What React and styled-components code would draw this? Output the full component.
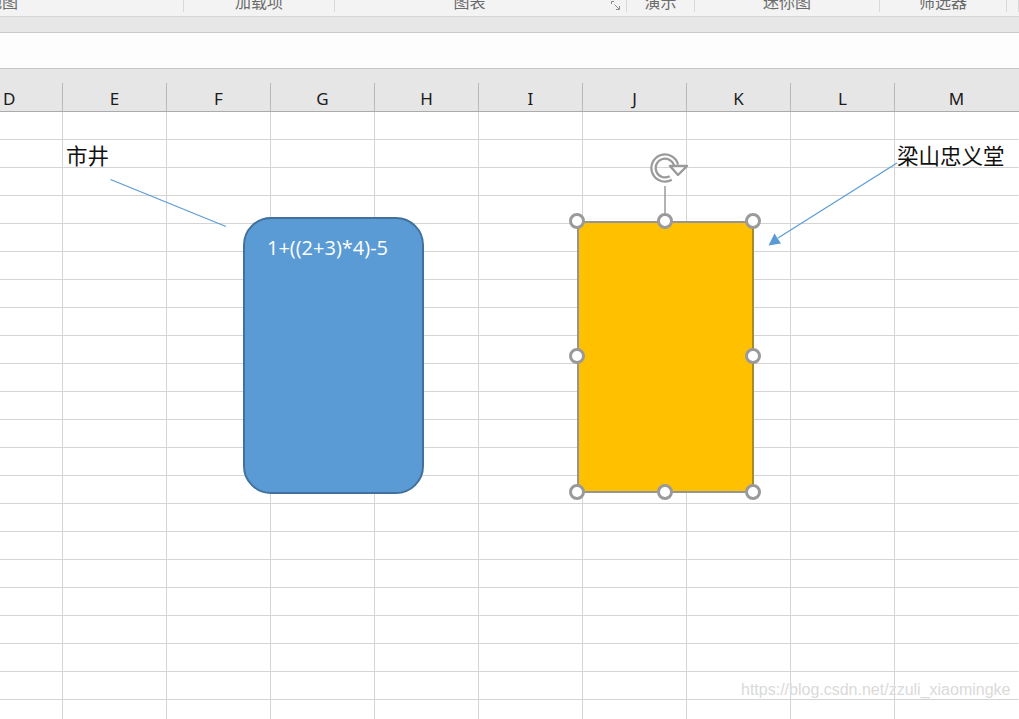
import React from "react";
import styled, { createGlobalStyle } from "styled-components";

const GlobalStyle = createGlobalStyle`
  html, body {
    margin: 0;
    padding: 0;
    background: #fff;
    overflow: hidden;
  }
  body {
    font-family: "Noto Sans", "Noto Sans CJK SC", sans-serif;
  }
`;

const Window = styled.div`
  position: relative;
  width: 1019px;
  height: 719px;
  overflow: hidden;
  background: #fff;
  display: flex;
  flex-direction: column;
`;

// ribbon group captions, cut off at the top of the screenshot
const RibbonCaptions = styled.div`
  display: flex;
  height: 16px;
  flex-shrink: 0;
  background: #f3f3f3;
  border-bottom: 1px solid #d6d6d6;
  overflow: hidden;
`;

const Group = styled.div`
  flex: 0 0 ${(p) => p.$w}px;
  height: 12px;
  display: flex;
  align-items: flex-start;
  justify-content: ${(p) => (p.$start ? "flex-start" : "center")};
  border-right: 1px solid #d9d9d9;
  box-sizing: border-box;
  padding-right: ${(p) => p.$padRight || 0}px;
`;

const Caption = styled.span`
  font-family: "Noto Sans CJK SC", sans-serif;
  font-size: 16px;
  line-height: 16px;
  color: #6b6b6b;
  margin-top: -7px;
  margin-left: ${(p) => p.$shift || 0}px;
  white-space: nowrap;
`;

const Launcher = styled.svg`
  position: absolute;
  left: 611px;
  top: 1px;
`;

const Band = styled.div`
  height: 15px;
  flex-shrink: 0;
  background: #e7e7e7;
  border-bottom: 1px solid #c9c9c9;
`;

const FormulaBar = styled.div`
  height: 35px;
  flex-shrink: 0;
  background: #fdfdfd;
  border-bottom: 1px solid #c6c6c6;
`;

const ColumnHeader = styled.div`
  height: 42px;
  flex-shrink: 0;
  background: #e6e6e6;
  border-bottom: 1px solid #ababab;
  display: grid;
  grid-template-columns: 63px repeat(8, 104px) 1fr;
  align-items: end;
`;

const HeaderCell = styled.div`
  height: 28px;
  box-sizing: border-box;
  border-right: 1px solid ${(p) => (p.$last ? "transparent" : "#b9b9b9")};
  display: flex;
  align-items: center;
  justify-content: ${(p) => (p.$left ? "flex-start" : "center")};
  padding-left: ${(p) => (p.$left ? 3 : 0)}px;
  padding-top: 3px;
  font-family: "Noto Sans", sans-serif;
  font-size: 17px;
  color: #1a1a1a;
`;

const Sheet = styled.div`
  flex: 1;
  display: grid;
  grid-template-columns: 63px repeat(8, 104px) 1fr;
  grid-auto-rows: 28px;
`;

const Cell = styled.div`
  box-sizing: border-box;
  border-right: 1px solid ${(p) => (p.$last ? "transparent" : "#d4d4d4")};
  border-bottom: 1px solid #d4d4d4;
`;

// free drawing layer: shapes sit at their own coordinates on the sheet
const Canvas = styled.div`
  position: absolute;
  inset: 0;
  pointer-events: none;
`;

const Lines = styled.svg`
  position: absolute;
  left: 0;
  top: 0;
`;

const TextBox = styled.div`
  position: absolute;
  left: ${(p) => p.$x}px;
  top: ${(p) => p.$y}px;
  font-family: "Noto Sans CJK SC", sans-serif;
  font-size: 21.5px;
  line-height: 21px;
  color: #111;
  white-space: nowrap;
`;

const RoundedShape = styled.div`
  position: absolute;
  left: 243px;
  top: 217px;
  width: 181px;
  height: 277px;
  box-sizing: border-box;
  background: #5b9bd5;
  border: 2px solid #41719c;
  border-radius: 28px;
  display: flex;
  justify-content: center;
  padding: 15px 12px 0 0;
  font-family: "Open Sans", sans-serif;
  font-size: 20px;
  line-height: 28px;
  color: #fff;
`;

const BlockShape = styled.div`
  position: absolute;
  left: 577px;
  top: 221px;
  width: 177px;
  height: 272px;
  box-sizing: border-box;
  background: #ffc000;
  border: 2px solid #959595;
  border-right-color: #a88a2e;
`;

const Handle = styled.div`
  position: absolute;
  left: ${(p) => p.$x - 8}px;
  top: ${(p) => p.$y - 8}px;
  width: 16px;
  height: 16px;
  box-sizing: border-box;
  border-radius: 50%;
  background: #fff;
  border: 3px solid #9a9a9a;
`;

const Watermark = styled.div`
  position: absolute;
  left: 741px;
  top: 681px;
  font-family: "Liberation Sans", sans-serif;
  font-size: 16px;
  color: #dadada;
  white-space: nowrap;
`;

const groups = [
  { w: 184, label: "地图", start: true, shift: -14 },
  { w: 151, label: "加载项" },
  { w: 292, label: "图表", padRight: 22 },
  { w: 68, label: "演示" },
  { w: 185, label: "迷你图" },
  { w: 127, label: "筛选器" },
  { w: 12, label: "" },
];

const columns = ["D", "E", "F", "G", "H", "I", "J", "K", "L", "M"];
const rowCount = 22;

const handles = [
  [577, 221], [665, 221], [753, 221],
  [577, 356], [753, 356],
  [577, 492], [665, 492], [753, 492],
];

function RotateIcon() {
  // hollow circular arrow above the selected shape
  const arc = "M 20.75 24 A 11.5 11.5 0 1 1 26.1 11";
  return (
    <g transform="translate(650 154)">
      <path d={arc} fill="none" stroke="#9a9a9a" strokeWidth="6.5" />
      <path d={arc} fill="none" stroke="#fff" strokeWidth="2" />
      <polygon points="20,12 37,12 28,21" fill="#fff" stroke="#9a9a9a" strokeWidth="2.4" strokeLinejoin="round" />
    </g>
  );
}

export default function App() {
  return (
    <>
      <GlobalStyle />
      <Window>
        <RibbonCaptions>
          {groups.map((g, i) => (
            <Group key={i} $w={g.w} $start={g.start} $padRight={g.padRight}>
              <Caption $shift={g.shift}>{g.label}</Caption>
            </Group>
          ))}
        </RibbonCaptions>
        <Launcher width="9" height="9" viewBox="0 0 9 9">
          <path d="M0.5 0.5 H3 M0.5 0.5 V3 M8.5 8.5 H5 M8.5 8.5 V5 M3.5 3.5 L8 8" stroke="#8a8a8a" strokeWidth="1" fill="none" />
        </Launcher>
        <Band />
        <FormulaBar />
        <ColumnHeader>
          {columns.map((c, i) => (
            <HeaderCell key={c} $left={i === 0} $last={i === columns.length - 1}>
              {c}
            </HeaderCell>
          ))}
        </ColumnHeader>
        <Sheet>
          {Array.from({ length: rowCount }).map((_, r) =>
            columns.map((c, i) => (
              <Cell key={`${r}-${c}`} $last={i === columns.length - 1} />
            ))
          )}
        </Sheet>

        <Canvas>
          <Lines width="1019" height="719" viewBox="0 0 1019 719">
            <line x1="110.5" y1="179.5" x2="226" y2="226.5" stroke="#5b9bd5" strokeWidth="1.2" />
            <line x1="897" y1="163" x2="778" y2="238" stroke="#5b9bd5" strokeWidth="1.2" />
            <polygon points="768.5,245.5 774.5,233.5 781,243.5" fill="#5b9bd5" />
            <line x1="665" y1="186" x2="665" y2="214" stroke="#9a9a9a" strokeWidth="1.5" />
            <RotateIcon />
          </Lines>

          <TextBox $x={66} $y={144}>市井</TextBox>
          <TextBox $x={897} $y={144}>梁山忠义堂</TextBox>

          <RoundedShape>1+((2+3)*4)-5</RoundedShape>

          <BlockShape />
          {handles.map(([x, y]) => (
            <Handle key={`${x}-${y}`} $x={x} $y={y} />
          ))}

          <Watermark>https://blog.csdn.net/zzuli_xiaomingke</Watermark>
        </Canvas>
      </Window>
    </>
  );
}
